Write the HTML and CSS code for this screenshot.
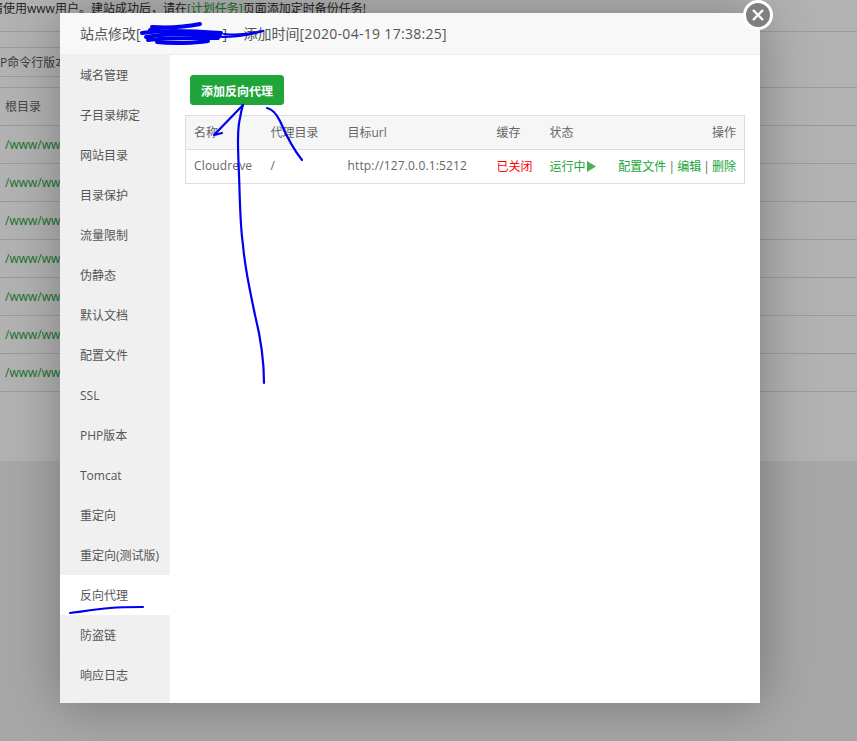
FILE: index.html
```html
<!DOCTYPE html>
<html lang="zh-CN">
<head>
<meta charset="utf-8">
<title>站点修改</title>
<link rel="stylesheet" href="styles.css">
</head>
<body>
<div class="page">
  <div class="notice">请使用www用户。建站成功后，请在<a class="link">[计划任务]</a>页面添加定时备份任务!</div>
  <div class="tabs"><span class="tab">PHP命令行版本</span></div>
  <div class="site-list">
    <div class="site-row">根目录</div>
    <div class="site-row path">/www/wwwroot/</div>
    <div class="site-row path">/www/wwwroot/</div>
    <div class="site-row path">/www/wwwroot/</div>
    <div class="site-row path">/www/wwwroot/</div>
    <div class="site-row path">/www/wwwroot/</div>
    <div class="site-row path">/www/wwwroot/</div>
    <div class="site-row path">/www/wwwroot/</div>
  </div>
</div>
<div class="shade"></div>
<section class="modal">
  <header class="modal-title">站点修改[<span class="redacted"></span>] -- 添加时间<span class="stamp">[2020-04-19 17:38:25]</span></header>
  <div class="modal-body">
    <nav class="side">
      <a class="side-item">域名管理</a>
      <a class="side-item">子目录绑定</a>
      <a class="side-item">网站目录</a>
      <a class="side-item">目录保护</a>
      <a class="side-item">流量限制</a>
      <a class="side-item">伪静态</a>
      <a class="side-item">默认文档</a>
      <a class="side-item">配置文件</a>
      <a class="side-item">SSL</a>
      <a class="side-item">PHP版本</a>
      <a class="side-item">Tomcat</a>
      <a class="side-item">重定向</a>
      <a class="side-item">重定向(测试版)</a>
      <a class="side-item active">反向代理</a>
      <a class="side-item">防盗链</a>
      <a class="side-item">响应日志</a>
    </nav>
    <main class="content">
      <button class="add-btn" type="button">添加反向代理</button>
      <table class="proxy-table">
        <colgroup>
          <col class="c1"><col class="c2"><col class="c3"><col class="c4"><col class="c5"><col>
        </colgroup>
        <thead>
          <tr><th>名称</th><th>代理目录</th><th>目标url</th><th>缓存</th><th>状态</th><th class="right">操作</th></tr>
        </thead>
        <tbody>
          <tr>
            <td class="latin">Cloudreve</td>
            <td>/</td>
            <td class="latin">http://127.0.0.1:5212</td>
            <td class="red">已关闭</td>
            <td class="green">运行中<svg class="play" viewBox="0 0 9 11" width="9" height="11"><path d="M0 0L9 5.5L0 11Z"/></svg></td>
            <td class="right ops"><a class="green">配置文件</a> | <a class="green">编辑</a> | <a class="green">删除</a></td>
          </tr>
        </tbody>
      </table>
    </main>
  </div>
</section>
<button class="close" type="button" aria-label="关闭">
  <svg viewBox="0 0 14 14" width="14" height="14"><path d="M2 2L12 12M12 2L2 12"/></svg>
</button>
<svg class="ink" viewBox="0 0 857 741" width="857" height="741">
  <g class="scribble">
    <path d="M152 27C167 28 185 27 200 24"/>
    <path d="M142 33C165 29 195 31 221 33"/>
    <path d="M146 37C170 33 200 34 220 36"/>
    <path d="M148 40C170 37 200 38 218 38"/>
    <path d="M157 42C172 44 195 43 208 41"/>
    <path d="M150 30C170 33 200 34 216 34"/>
  </g>
  <path d="M222 37C235 37 250 35 263 31"/>
  <path d="M224 34C236 35 250 34 258 32"/>
  <path d="M264 383C264 360 260 335 255 315C250 290 245 270 243 245C240 225 240 200 239 175C238 150 237 130 240 118C241 112 242 108 243 105"/>
  <path d="M243 105L214 135L222 133"/>
  <path d="M267 108C272 109 276 113 280 121C286 135 294 150 302 160"/>
  <path d="M70 613C85 611 98 609 110 608C122 607 133 607 143 607"/>
</svg>
</body>
</html>
```
FILE: styles.css
```css
* { box-sizing: border-box; }
html, body { margin: 0; padding: 0; height: 100%; }
body {
  width: 857px;
  height: 741px;
  overflow: hidden;
  position: relative;
  background: #f0f0f0;
  font-family: "Open Sans", "Noto Sans CJK SC", sans-serif;
  font-size: 12px;
  color: #666;
}
.page {
  height: 461px;
  background: #fff;
  overflow: hidden;
}
.notice {
  width: 866px;
  height: 32px;
  margin-left: -9px;
  line-height: 17px;
  color: #333;
  border-bottom: 1px solid #ddd;
  white-space: nowrap;
}
.link { color: #20a53a; }
.tabs {
  margin: 15px 0 10px;
  height: 30px;
}
.tab {
  display: block;
  width: 120px;
  height: 30px;
  margin-left: -16px;
  line-height: 30px;
  color: #555;
  border-top: 1px solid #ddd;
  border-bottom: 1px solid #ddd;
}
.site-list { border-top: 1px solid #ddd; }
.site-row {
  height: 38px;
  line-height: 38px;
  padding-left: 5px;
  border-bottom: 1px solid #ddd;
  color: #666;
}
.path { color: #20a53a; }
.shade {
  position: absolute;
  inset: 0;
  background: rgba(0, 0, 0, .3);
}
.modal {
  position: absolute;
  left: 60px;
  top: 13px;
  width: 700px;
  height: 690px;
  display: flex;
  flex-direction: column;
  background: #fff;
  box-shadow: 1px 1px 50px rgba(0, 0, 0, .3);
}
.modal-title {
  height: 42px;
  flex: none;
  padding-left: 20px;
  line-height: 41px;
  font-size: 14px;
  color: #555;
  background: #f8f8f8;
  border-bottom: 1px solid #eee;
  white-space: nowrap;
}
.redacted {
  display: inline-block;
  width: 82px;
}
.stamp { letter-spacing: .3px; }
.modal-body {
  flex: 1;
  display: flex;
  min-height: 0;
}
.side {
  flex: none;
  width: 110px;
  background: #f0f0f0;
  display: flex;
  flex-direction: column;
}
.side-item {
  height: 40px;
  line-height: 42px;
  padding-left: 20px;
  color: #555;
  white-space: nowrap;
}
.side-item.active { background: #fff; color: #555; }
.content {
  flex: 1;
  padding: 20px 15px 0;
}
.add-btn {
  display: block;
  margin: 0 0 10px 5px;
  width: 94px;
  height: 30px;
  padding: 1px 0 0;
  border: 1px solid #20a53a;
  border-radius: 3px;
  background: #20a53a;
  color: #fff;
  font: bold 12px "Open Sans", "Noto Sans CJK SC", sans-serif;
}
.proxy-table {
  width: 560px;
  border-collapse: collapse;
  table-layout: fixed;
  border: 1px solid #ddd;
}
.c1, .c2 { width: 77px; }
.c3 { width: 149px; }
.c4 { width: 53px; }
.c5 { width: 65px; }
.proxy-table th, .proxy-table td {
  height: 34px;
  padding: 0 8px 2px;
  text-align: left;
  font-weight: normal;
  color: #666;
  white-space: nowrap;
  border-bottom: 1px solid #ddd;
}
.proxy-table th { background: #f6f6f6; }
.proxy-table .right { text-align: right; }
.proxy-table .latin { letter-spacing: .15px; }
.proxy-table .ops { word-spacing: -1px; }
.proxy-table .red { color: #f00; }
.proxy-table .green, .green { color: #20a53a; }
.play { fill: #4caf50; vertical-align: -1px; margin-left: 1px; }
.close {
  position: absolute;
  left: 743px;
  top: 0;
  width: 30px;
  height: 30px;
  padding: 0;
  border: 3px solid #fff;
  border-radius: 50%;
  background: #7f7f7f;
  display: flex;
  align-items: center;
  justify-content: center;
}
.close path { stroke: #fff; stroke-width: 2.4; fill: none; }
.ink {
  position: absolute;
  left: 0;
  top: 0;
  pointer-events: none;
}
.ink path {
  fill: none;
  stroke: #0000f0;
  stroke-width: 2.2;
  stroke-linecap: round;
  stroke-linejoin: round;
}
.ink .scribble path { stroke-width: 4; }
```
